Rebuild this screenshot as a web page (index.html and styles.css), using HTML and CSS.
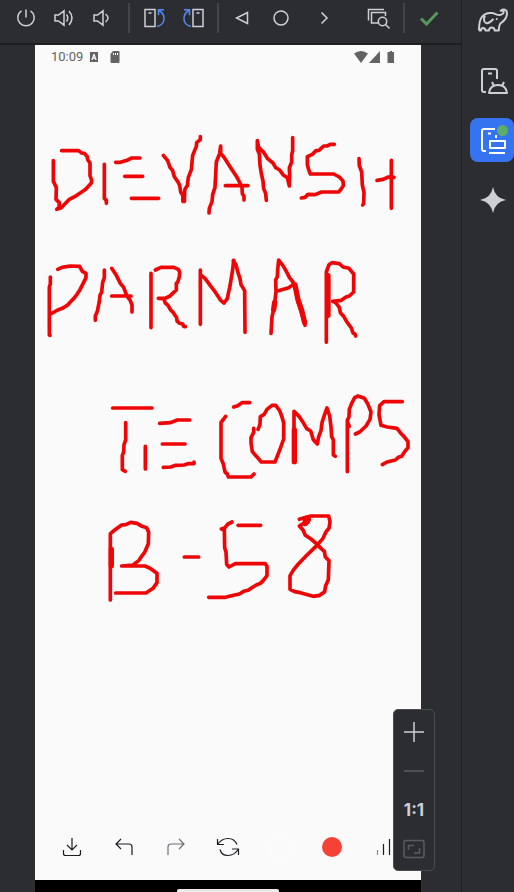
FILE: index.html
```html
<!DOCTYPE html>
<html lang="en">
<head>
<meta charset="utf-8">
<meta name="viewport" content="width=device-width, initial-scale=1">
<title>Running Devices</title>
<link rel="stylesheet" href="styles.css">
</head>
<body>
<main class="emulator">
  <div class="toolbar" role="toolbar" aria-label="Device controls">
    <button class="tool" aria-label="Power"><svg viewBox="0 0 24 24"><path d="M12 3.500v8M7.500 4.800a8.200 8.200 0 1 0 9 0"/></svg></button>
    <button class="tool" aria-label="Volume up"><svg viewBox="0 0 24 24"><path d="M3 9h3.500L12 4.800v14.400L6.500 15H3zM14.500 8.500q2.500 3.500 0 7M17 5q6 7 0 14"/></svg></button>
    <button class="tool" aria-label="Volume down"><svg viewBox="0 0 24 24"><path d="M4 9h3.500L13 4.800v14.400L7.500 15H4zM15.500 8q5 4 0 8"/></svg></button>
    <span class="divider"></span>
    <button class="tool" aria-label="Rotate left"><svg viewBox="0 0 24 24"><path d="M2 3.500h10v17H2zM5.500 7h3"/><path class="blue" d="M14 20.500c9-2 9-12 2-16M21 3.700h-5.500v5.500"/></svg></button>
    <button class="tool" aria-label="Rotate right"><svg viewBox="0 0 24 24"><path d="M12 3.500h10v17H12zM15.500 7h3"/><path class="blue" d="M10 20.500c-9-2-9-12-2-16M3 3.700h5.500v5.500"/></svg></button>
    <span class="divider"></span>
    <button class="tool" aria-label="Back"><svg viewBox="0 0 24 24"><path d="M17.500 6.500v11L6.500 12z"/></svg></button>
    <button class="tool" aria-label="Home"><svg viewBox="0 0 24 24"><circle cx="12" cy="12" r="7"/></svg></button>
    <button class="tool" aria-label="More"><svg viewBox="0 0 24 24"><path d="M9.500 6.500 15 12l-5.500 5.500"/></svg></button>
    <button class="tool tool-inspect" aria-label="Inspect screen"><svg viewBox="0 0 24 24"><path d="M2.500 14.500V3.500H18M12 17H5.500V6.500h14V10"/><circle cx="16.500" cy="15.500" r="4.200"/><path d="m19.500 18.500 4 4"/></svg></button>
    <span class="divider"></span>
    <button class="tool" aria-label="Ready"><svg viewBox="0 0 24 24"><path class="check" d="m4 12.500 5.500 5.500L20.500 6.500"/></svg></button>
  </div>

  <div class="stage">
    <section class="device" aria-label="Device screen">
      <header class="status">
        <span>10:09</span>
        <svg class="status-app" viewBox="0 0 10 10"><path fill-rule="evenodd" d="M1 0h8v10H1zM2.300 8h1.300l.5-1.300h1.800L6.400 8h1.300L5.600 2H4.400zM4.500 5.600 5 4l.5 1.600z"/></svg>
        <svg class="status-card" viewBox="0 0 12 12"><path fill-rule="evenodd" d="M4 0h5.500q1 0 1 1v10q0 1-1 1h-7q-1 0-1-1V3zM4 2v2h1V2zm2 0v2h1V2zm2 0v2h1V2z"/></svg>
        <svg class="status-signal" viewBox="0 0 42 12"><path d="M0 2.500Q7-2.500 14 2.500L7 12zM26 0v12H15zM34 1h2V0h2v1h2v11h-6.500V1z"/></svg>
      </header>

      <svg class="sketch" viewBox="35 68 386 740" role="img" aria-label="Freehand drawing">
        <g transform="translate(35 130) scale(.33333)">
          <path d="M55 92v62l9 18-1 36 10 10-1 14-7 6 13-4 25-26 16-8 33-22 17-19 1-8-5-14V99l-7-10-1-9-9-10-8-1-9-7H80"/>
          <path d="M208 103v102l6 6v9M242 97h14l20-6 14-7h25M269 139h54M289 205h82"/>
          <path d="m385 76 13 16 7 20 8 10 5 18 11 16 5 10 3 20 10 16 3-25 7-10 3-25 9-23 4-43 11-27 1-11 11-9v-9"/>
          <path class="bold" d="M446 194v18"/>
          <path d="m522 249 1-14 8-20 2-21 7-22 4-76 10-26 3-22v22l11 13 19 30 19 29 11 21 4 9 1 19 5 8v11M571 167h68"/>
        </g>
        <g transform="translate(225 130) scale(.33333)">
          <path d="m124 211-2-20-6-15-2-23-5-22-4-25-2-34-6-14V32l4 20 15 15 12 19 16 13 8 14 12 7 10 14 13 9 6 25 1-29-1-25 7-18V74l3-11V23"/>
          <path d="M328 43h-12l-10 5h-10l-14 13-9 1-11 11-15 7v24l4 15 5 13h70l17 9 11 12 1 14-8 12-6 7h-51l-20 8-21-1-9 9-11 2"/>
          <path d="m402 86 1 21 7 19 2 39 5 22-1 34-3 4M456 151l18-3 16-7 17 1M499 91v144"/>
        </g>
        <g transform="translate(35 250) scale(.33333)">
          <path d="M46 81v21l-3 9v144l2 1M68 58l13-6 24-4 29 1 8 15 11 6v13l-7 14-11 22-9 14-10 13-10 10-8 9-16 10-14 5-21 12"/>
          <path d="M208 60v23l-5 14-3 29-5 10-2 18-6 30-6 14v13M230 55l14 21 12 24 10 12 9 25 11 15 5 13v21M230 138h58"/>
          <path d="M348 70v163M361 60l17-8h38l14 6 4 8-1 14-5 17-4 3v20l-12 11-7 7-15 7h-20l16 1 5 13 8 7 8 14 8 8 10 15 1 10 8 7 9 2 3 7 5 1"/>
          <path d="M496 223V60v14l14 11 16 22 11 14 11 16 9 14 10 8 10-13 3-16 5-22 8-49 3-28"/>
        </g>
        <g transform="translate(225 250) scale(.33333)">
          <path d="m25 32 8 13 7 26 5 15 3 18 11 18 1 125"/>
          <path d="m138 250 3-50 6-25 6-50-1-35 5-10 1-20 3-30 13 17 10 17 9 18 11 14 8 24 7 36 10 30 11 40"/>
          <path class="bold" d="m210 105 9 44 11 32 9 37M149 157l-3 22"/>
          <path d="m160 122 21-6 10-3 15-10"/>
          <path d="M304 277V66l8-22 9-6 22 3 11 10 18 4 14 17v54l-13 12-10 3-14 10-26 3 9 4 11 14 3 16 10 11 9 16 14 19 5 15 6 3 2 6"/>
          <path class="bold" d="M309 77v119"/>
        </g>
        <g transform="translate(95 390) scale(.33333)">
          <path d="M53 54h118M92 98v52l-5 14-1 22-4 10v43l9 5M151 169v68M194 100l33-2 20-8h37M202 162h68M205 232l22-1 15-5 25-1 12-4h18v-5"/>
          <path d="m416 51 12-4 13-9h23M392 79l-6 8-8 10v108l7 17 5 24 7 6 3 9h68l9-9"/>
        </g>
        <g transform="translate(240 385) scale(.33333)">
          <path d="m54 133 6-15 1-23 11-6 9-16 15-12h11l12 16 7 19 5 18v48l-10 28-16 41H64l-27-31-4-26v-16l8-16v-12"/>
          <path d="M162 231V79l16 16 10 15 12 21 12 7 8 26 12 13 4-22 7-18 3-24 7-22 8-22 8 24 4 32 2 30 5 10v45l6 4"/>
          <path class="bold" d="M163 135v95"/>
          <path d="M322 260V106l5-11 1-22 7-18 9-17 10-5 19 7 10 16 10 25-3 22-12 20-19 18-13 6M323 112l5 12"/>
          <path d="M487 50h-55l-13 12-2 27 6 32 19 5 29 4 10 13 13 14 10 13v18l-10 12-9 14-10 3-9 8-25 6-14 8"/>
        </g>
        <g transform="translate(95 505) scale(.33333)">
          <path d="M46 285V86l17-14 17-12 12-1 15-7 19 3 15 9 14 4 6 14-1 34-11 26-10 13-7 11-18 14-34 3h70l17 8 19 14v28l-12 17-21 14H62"/>
          <path class="bold" d="M49 133v49"/>
          <path d="M268 156h43M429 61h68M411 51l-12 6-10 12-10 3 9 3 1 53 4 13 2 37 7 8 19-10h90l5 8v28l-11 14-9 9-12 5-10 6-15 10-13 3-13 8-17 4-25 6h-50"/>
          <path d="m613 43 20-6 15-4h53l4 17-3 20-9 10-9 20-19 22-32 31-23 24-14 17-11 18v41l14 7 17 3 16 5 22 6 20-3 15-11 3-18 8-18 2-57-11-11-3-17-10-9-14-14-16-14-17-11-7-16-11-12 8-5 19-7"/>
          <path class="bold" d="M631 42v14l9-12"/>
        </g>
      </svg>

      <nav class="actions" aria-label="Drawing tools">
        <button class="action" aria-label="Save"><svg viewBox="0 0 24 24"><path d="M12 3v12M7 10l5 5 5-5M3.500 15v3.500q0 2 2 2h13q2 0 2-2V15"/></svg></button>
        <button class="action" aria-label="Undo"><svg viewBox="0 0 24 24"><path d="M9 4 4 9l5 5M4 9h13q3 0 3 3v8"/></svg></button>
        <button class="action action-muted" aria-label="Redo"><svg viewBox="0 0 24 24"><path d="m15 4 5 5-5 5M20 9H7q-3 0-3 3v8"/></svg></button>
        <button class="action" aria-label="Clear"><svg viewBox="0 0 24 24"><path d="M1.500 4v5.500H8M1.500 9.500q4-6 10.500-6 6.500 0 9 6M22.500 20v-6H16M22.500 14q-4 6.500-10.500 6.500T4 14.500"/></svg></button>
        <button class="action" aria-label="Background color"><span class="swatch swatch-paper"></span></button>
        <button class="action" aria-label="Brush color"><span class="swatch swatch-red"></span></button>
        <button class="action" aria-label="Stroke width"><svg viewBox="0 0 24 24"><path class="light" d="M5.500 15v5"/><path d="M11.500 9v11M17.500 4v16"/></svg></button>
      </nav>
      <div class="gesture"><span class="handle"></span></div>
    </section>

    <div class="zoom" role="group" aria-label="Zoom">
      <button class="zoom-button" aria-label="Zoom in"><svg viewBox="0 0 24 24"><path d="M12 2v20M2 12h20"/></svg></button>
      <button class="zoom-button zoom-off" aria-label="Zoom out"><svg viewBox="0 0 24 24"><path d="M2 12h20"/></svg></button>
      <button class="zoom-button">1:1</button>
      <button class="zoom-button zoom-off" aria-label="Fit to window"><svg viewBox="0 0 24 24"><rect x="2" y="3.500" width="20" height="17" rx="2"/><path d="M6.500 13V8.500H12M17.500 11v5H12"/></svg></button>
    </div>
  </div>
</main>

<aside class="rail" aria-label="Tool windows">
  <button class="rail-button" aria-label="Gradle"><svg viewBox="0 0 32 32"><path d="M3 24.500C3 19 3 15 5.500 11.500 8 8 12 6.500 16 7c3 .3 5 2.500 8 2 2.500-.4 4-2 3.600-3.600-.4-1.400-2.200-1.200-3.600-.2M25 4.500c2.500-2 6-.8 6 2.500 0 5-3 8-6 10-2 1.500-2 4-2.200 7.500h-4q-.5-3-3-3t-3 3H9.500q-.5-2.500-2.500-2.500T5 24.500H3M9 9.500c-1.500 3-1.500 6.500 1 7.500 3 1 5-1.500 7.500-4"/><path d="m20 12.500 1.500 1"/></svg></button>
  <button class="rail-button" aria-label="Device Manager"><svg viewBox="0 0 32 32"><path d="M10 27H8q-2 0-2-2V6q0-2 2-2h11q2 0 2 2v8M12 8.500h4M13 28q1-8 9-8t9 8zM18 21l-2-4M26 21l2-4"/></svg></button>
  <button class="rail-button rail-active" aria-label="Running Devices"><svg viewBox="0 0 32 32"><path d="M10 27H8q-2 0-2-2V7q0-2 2-2h11M12 9.500h3M20 11v3M14 17h15v7H14zM13 29h16"/></svg><span class="live"></span></button>
  <button class="rail-button" aria-label="Gemini"><svg viewBox="0 0 32 32"><path class="solid" d="M17 4q2 11 13 13-11 2-13 13Q15 19 4 17 15 15 17 4z"/></svg></button>
</aside>
</body>
</html>
```
FILE: styles.css
```css
* { box-sizing: border-box; }

body {
  margin: 0;
  min-height: 100vh;
  display: flex;
  background: #2b2d30;
  color: #ced0d6;
  font-family: Roboto, "Liberation Sans", sans-serif;
}

button {
  display: flex;
  align-items: center;
  justify-content: center;
  padding: 0;
  border: 0;
  background: none;
  color: inherit;
  font: inherit;
}

svg {
  display: block;
  fill: none;
  stroke: currentColor;
}

.emulator {
  flex: 1;
  min-width: 0;
  display: flex;
  flex-direction: column;
}

.toolbar {
  display: grid;
  grid-template-columns: 38px 38px 37px 17px 35px 42px 8px 40px 38px 48px 52px 8px 42px;
  align-items: center;
  height: 45px;
  padding: 0 0 8px 7px;
  border-bottom: 2px solid #1e1f22;
}

.tool svg {
  width: 24px;
  height: 24px;
  stroke-width: 1.5;
}

.tool-inspect { padding-left: 8px; }

.tool .blue { stroke: #548af7; }

.tool .check {
  stroke: #57965c;
  stroke-width: 3;
}

.divider {
  justify-self: center;
  width: 2px;
  height: 30px;
  background: #43454a;
}

.stage {
  position: relative;
  flex: 1;
  display: flex;
  padding: 0 40px 0 35px;
}

.device {
  flex: 1;
  min-width: 0;
  display: flex;
  flex-direction: column;
  background: #fafafa;
}

.status {
  display: flex;
  align-items: center;
  height: 23px;
  padding: 0 25px 0 16px;
  color: #636363;
  font-size: 13px;
}

.status svg {
  fill: currentColor;
  stroke: none;
}

.status-app { width: 10px; height: 10px; margin-left: 6px; }
.status-card { width: 12px; height: 12px; margin-left: 10px; }
.status-signal { width: 42px; height: 12px; margin-left: auto; }

.sketch {
  width: 100%;
  height: auto;
  stroke: #f00506;
  stroke-width: 11;
  stroke-linecap: round;
  stroke-linejoin: round;
}

.sketch .bold { stroke-width: 16; }

.actions {
  display: grid;
  grid-template-columns: repeat(7, 1fr);
  align-items: center;
  height: 66px;
  margin-top: auto;
  padding: 0 11px;
  color: #1c1c22;
}

.action svg {
  width: 24px;
  height: 24px;
  stroke-width: 1.2;
}

.action-muted { color: #6d6d74; }
.action .light { stroke: #8a8a8e; }

.swatch {
  width: 20px;
  height: 20px;
  border-radius: 50%;
}

.swatch-paper {
  width: 24px;
  height: 24px;
  border: 1px solid #fff;
}

.swatch-red { background: #f44336; }

.gesture {
  display: flex;
  align-items: flex-end;
  justify-content: center;
  height: 12px;
  background: #000;
}

.handle {
  width: 102px;
  height: 3px;
  border-radius: 2px 2px 0 0;
  background: #ebebeb;
}

.zoom {
  position: absolute;
  right: 26px;
  bottom: 21px;
  width: 42px;
  padding: 2px 0;
  border: 1px solid #4a4c50;
  border-radius: 5px;
  background: #2b2d30;
}

.zoom-button {
  width: 100%;
  height: 39px;
  font: bold 17px Inter, "Liberation Sans", sans-serif;
}

.zoom-button svg {
  width: 24px;
  height: 24px;
  stroke-width: 1.5;
}

.zoom-off { color: #5a5c61; }

.rail {
  display: flex;
  flex-direction: column;
  gap: 15px;
  width: 53px;
  padding-left: 8px;
  border-left: 1px solid #1e1f22;
}

.rail-button {
  position: relative;
  width: 44px;
  height: 44px;
}

.rail-button svg {
  width: 32px;
  height: 32px;
  stroke-width: 2;
  stroke-linejoin: round;
}

.rail-button .solid {
  fill: currentColor;
  stroke: none;
}

.rail-active {
  border-radius: 8px;
  background: #3574f0;
  color: #fff;
}

.live {
  position: absolute;
  top: 7px;
  right: 6px;
  width: 11px;
  height: 11px;
  border-radius: 50%;
  background: #5fad65;
}
```
